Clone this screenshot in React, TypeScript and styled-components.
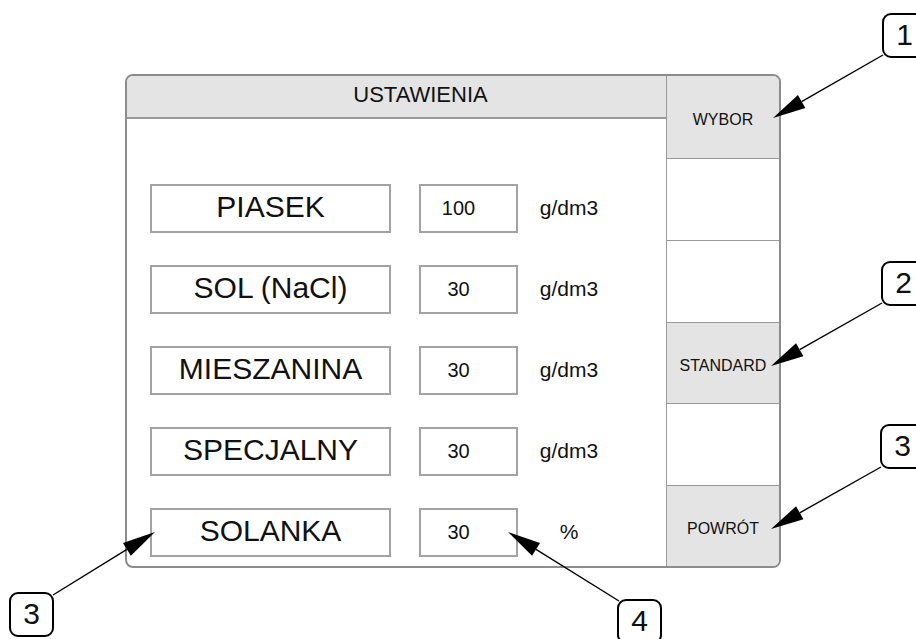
import styled, { createGlobalStyle } from "styled-components";

const GlobalStyle = createGlobalStyle`
  html, body {
    margin: 0;
    padding: 0;
    background: #ffffff;
    overflow: hidden;
  }
  body {
    font-family: "Liberation Sans", Arial, sans-serif;
    color: #111111;
  }
`;

const Page = styled.div`
  position: relative;
  width: 916px;
  height: 639px;
  padding: 74px 0 0 125px;
  box-sizing: border-box;
  overflow: hidden;
`;

const Panel = styled.div`
  display: flex;
  width: 656px;
  height: 494px;
  box-sizing: border-box;
  border: 2px solid #8c8c8c;
  border-radius: 8px;
  overflow: hidden;
  background: #ffffff;
`;

const MainArea = styled.div`
  width: 539px;
  display: flex;
  flex-direction: column;
`;

const Header = styled.div`
  height: 43px;
  box-sizing: border-box;
  background: #e4e4e4;
  border-bottom: 2px solid #999999;
  padding-left: 48px;
  display: flex;
  align-items: center;
  justify-content: center;
  font-size: 22px;
  padding-bottom: 3px;
`;

const Rows = styled.div`
  display: flex;
  flex-direction: column;
  gap: 32px;
  padding: 65px 0 0 23px;
`;

const Row = styled.div`
  display: flex;
  height: 49px;
`;

const LabelBox = styled.div`
  width: 241px;
  box-sizing: border-box;
  border: 2px solid #a3a3a3;
  display: flex;
  align-items: center;
  justify-content: center;
  font-size: 30px;
  padding-bottom: 4px;
`;

const ValueBox = styled.div`
  width: 99px;
  margin-left: 28px;
  box-sizing: border-box;
  border: 2px solid #a3a3a3;
  line-height: 45px;
  font-size: 20px;
  text-align: center;
  padding-right: 20px;
`;

const Unit = styled.div`
  width: 62px;
  margin-left: 20px;
  padding-top: 1px;
  line-height: 45px;
  font-size: 21px;
  text-align: center;
`;

const SideColumn = styled.div`
  flex: 1;
  border-left: 1px solid #999999;
  display: grid;
  grid-template-rows: 83px 82px 82px 81px 82px 1fr;
`;

const SideCell = styled.div<{ $active?: boolean }>`
  background: ${(p) => (p.$active ? "#e4e4e4" : "#ffffff")};
  border-bottom: 1px solid #999999;
  display: flex;
  align-items: center;
  justify-content: center;
  font-size: 16px;
  padding-top: 5px;

  &:last-child {
    border-bottom: none;
  }
`;

const Callout = styled.div<{ $x: number; $y: number }>`
  position: absolute;
  left: ${(p) => p.$x}px;
  top: ${(p) => p.$y}px;
  width: 45px;
  height: 45px;
  box-sizing: border-box;
  border: 2px solid #000000;
  border-radius: 9px;
  background: #ffffff;
  display: flex;
  align-items: center;
  justify-content: center;
  font-size: 30px;
  padding-bottom: 1px;
`;

const Overlay = styled.svg`
  position: absolute;
  left: 0;
  top: 0;
  pointer-events: none;
`;

const rows = [
  { label: "PIASEK", value: "100", unit: "g/dm3" },
  { label: "SOL (NaCl)", value: "30", unit: "g/dm3" },
  { label: "MIESZANINA", value: "30", unit: "g/dm3" },
  { label: "SPECJALNY", value: "30", unit: "g/dm3" },
  { label: "SOLANKA", value: "30", unit: "%" },
];

const side = [
  { text: "WYBOR", active: true },
  { text: "", active: false },
  { text: "", active: false },
  { text: "STANDARD", active: true },
  { text: "", active: false },
  { text: "POWRÓT", active: true },
];

const callouts = [
  { n: "1", x: 882, y: 13, from: [883, 55], to: [773, 118] },
  { n: "2", x: 881, y: 261, from: [882, 303], to: [771, 366] },
  { n: "3", x: 880, y: 424, from: [881, 467], to: [771, 529] },
  { n: "3", x: 9, y: 592, from: [53, 595], to: [155, 532] },
  { n: "4", x: 617, y: 599, from: [619, 601], to: [508, 532] },
];

function Arrow({ from, to }: { from: number[]; to: number[] }) {
  const dx = to[0] - from[0];
  const dy = to[1] - from[1];
  const len = Math.hypot(dx, dy);
  const ux = dx / len;
  const uy = dy / len;
  const bx = to[0] - ux * 33;
  const by = to[1] - uy * 33;
  const px = -uy * 7.5;
  const py = ux * 7.5;
  const pts = `${to[0]},${to[1]} ${bx + px},${by + py} ${bx - px},${by - py}`;
  return (
    <g>
      <line x1={from[0]} y1={from[1]} x2={bx} y2={by} stroke="#000" strokeWidth={1.4} />
      <polygon points={pts} fill="#000" />
    </g>
  );
}

export default function App() {
  return (
    <>
      <GlobalStyle />
      <Page>
        <Panel>
          <MainArea>
            <Header>USTAWIENIA</Header>
            <Rows>
              {rows.map((r) => (
                <Row key={r.label}>
                  <LabelBox>{r.label}</LabelBox>
                  <ValueBox>{r.value}</ValueBox>
                  <Unit>{r.unit}</Unit>
                </Row>
              ))}
            </Rows>
          </MainArea>
          <SideColumn>
            {side.map((s, i) => (
              <SideCell key={i} $active={s.active}>
                {s.text}
              </SideCell>
            ))}
          </SideColumn>
        </Panel>
        <Overlay width={916} height={639} viewBox="0 0 916 639">
          {callouts.map((c, i) => (
            <Arrow key={i} from={c.from} to={c.to} />
          ))}
        </Overlay>
        {callouts.map((c, i) => (
          <Callout key={i} $x={c.x} $y={c.y}>
            {c.n}
          </Callout>
        ))}
      </Page>
    </>
  );
}
